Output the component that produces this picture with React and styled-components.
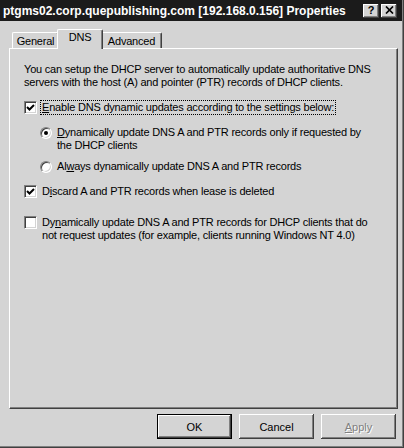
import React from 'react';
import styled, { createGlobalStyle } from 'styled-components';

const GlobalStyle = createGlobalStyle`
  html, body {
    margin: 0;
    padding: 0;
    background: #d4d4d4;
  }
  body {
    font-family: "Liberation Sans", Arial, sans-serif;
    font-size: 11px;
    color: #000;
  }
`;

const Window = styled.div`
  width: 404px;
  height: 448px;
  box-sizing: border-box;
  display: flex;
  flex-direction: column;
  background: #d4d4d4;
  border-right: 1px solid #404040;
  border-bottom: 1px solid #404040;
  box-shadow: inset -1px -1px 0 #808080;
`;

const TitleBar = styled.div`
  height: 21px;
  flex: none;
  display: flex;
  align-items: center;
  justify-content: space-between;
  padding: 0 5px 0 3px;
  margin-right: 1px;
  background: #1b1b1b;
`;

const Title = styled.span`
  color: #fff;
  font-weight: bold;
  font-size: 12px;
  white-space: nowrap;
`;

const TitleButtons = styled.div`
  display: flex;
  gap: 2px;
`;

const TitleButton = styled.div`
  width: 16px;
  height: 14px;
  box-sizing: border-box;
  display: flex;
  align-items: center;
  justify-content: center;
  background: #d4d4d4;
  box-shadow: inset -1px -1px 0 #404040, inset 1px 1px 0 #fff, inset -2px -2px 0 #808080;
  font-weight: bold;
  font-size: 11px;
  line-height: 1;
  padding-bottom: 1px;
`;

const Body = styled.div`
  flex: 1;
  display: flex;
  flex-direction: column;
  padding: 8px 5px 0 9px;
`;

const TabStrip = styled.div`
  height: 19px;
  display: flex;
  align-items: flex-end;
  padding-left: 3px;
`;

const Tab = styled.div`
  position: relative;
  box-sizing: border-box;
  width: ${p => p.$w}px;
  height: 16px;
  display: flex;
  justify-content: center;
  align-items: center;
  background: #d4d4d4;
  border-left: 1px solid #fff;
  border-top: 1px solid #fff;
  border-right: 1px solid #404040;
  border-radius: 2px 2px 0 0;
  box-shadow: inset -1px 0 0 #808080;
  letter-spacing: -0.2px;

  ${p => p.$selected && `
    width: ${p.$w + 4}px;
    height: 20px;
    margin: 0 -2px -1px;
    z-index: 1;
    align-items: flex-start;
    padding-top: 1px;
  `}
`;

const Panel = styled.div`
  height: 361px;
  flex: none;
  box-sizing: border-box;
  display: flex;
  flex-direction: column;
  padding: 14px 12px 0 14px;
  border-top: 1px solid #fff;
  border-left: 1px solid #fff;
  border-right: 1px solid #404040;
  border-bottom: 1px solid #404040;
  box-shadow: inset -1px -1px 0 #808080;
  line-height: 13px;
  letter-spacing: -0.2px;
`;

const Intro = styled.p`
  margin: 0;
`;

const Row = styled.div`
  display: flex;
  align-items: flex-start;
  gap: 5px;
  margin-top: ${p => p.$top}px;
`;

const RadioGroup = styled.div`
  display: flex;
  flex-direction: column;
  margin-left: 16px;
`;

const CheckBox = styled.div`
  flex: none;
  width: 13px;
  height: 13px;
  box-sizing: border-box;
  background: #fff;
  border: 1px solid;
  border-color: #808080 #fff #fff #808080;
  box-shadow: inset 1px 1px 0 #404040, inset -1px -1px 0 #d4d4d4;
  display: flex;
  align-items: center;
  justify-content: center;
`;

const Radio = styled.div`
  flex: none;
  width: 12px;
  height: 12px;
  margin-top: 1px;
  box-sizing: border-box;
  border-radius: 50%;
  background: #fff;
  border: 1px solid;
  border-color: #808080 #fff #fff #808080;
  box-shadow: inset 1px 1px 0 #404040, inset -1px -1px 0 #d4d4d4;
  display: flex;
  align-items: center;
  justify-content: center;

  &::after {
    content: '';
    width: 4px;
    height: 4px;
    border-radius: 50%;
    background: ${p => (p.$on ? '#000' : 'transparent')};
  }
`;

const Label = styled.span`
  white-space: nowrap;
  ${p => p.$focus && `
    outline: 1px dotted #000;
    outline-offset: 0;
    margin-left: -1px;
    padding: 0 1px;
  `}
`;

const U = styled.span`
  text-decoration: underline;
  text-underline-offset: 1px;
`;

const ButtonRow = styled.div`
  display: flex;
  justify-content: flex-end;
  gap: 7px;
  margin-top: 5px;
  padding-right: 2px;
`;

const Button = styled.div`
  width: 75px;
  height: 25px;
  box-sizing: border-box;
  display: flex;
  align-items: center;
  justify-content: center;
  background: #d4d4d4;
  box-shadow: inset -1px -1px 0 #404040, inset 1px 1px 0 #fff, inset -2px -2px 0 #808080;
  color: ${p => (p.$disabled ? '#808080' : '#000')};
  text-shadow: ${p => (p.$disabled ? '1px 1px 0 #fff' : 'none')};

  ${p => p.$default && `
    border: 1px solid #000;
  `}
`;

const Check = () => (
  <svg width="9" height="9" viewBox="0 0 9 9">
    <path d="M1 4 L3.5 6.5 L8 2" fill="none" stroke="#000" strokeWidth="2" />
  </svg>
);

const CloseGlyph = () => (
  <svg width="9" height="8" viewBox="0 0 9 8">
    <path d="M1 0.5 L8 7.5 M8 0.5 L1 7.5" stroke="#000" strokeWidth="1.7" />
  </svg>
);

export default function App() {
  return (
    <>
      <GlobalStyle />
      <Window>
        <TitleBar>
          <Title>ptgms02.corp.quepublishing.com [192.168.0.156] Properties</Title>
          <TitleButtons>
            <TitleButton>?</TitleButton>
            <TitleButton><CloseGlyph /></TitleButton>
          </TitleButtons>
        </TitleBar>

        <Body>
          <TabStrip>
            <Tab $w={47}>General</Tab>
            <Tab $w={42} $selected>DNS</Tab>
            <Tab $w={61}>Advanced</Tab>
          </TabStrip>

          <Panel>
            <Intro>
              You can setup the DHCP server to automatically update authoritative DNS
              <br />
              servers with the host (A) and pointer (PTR) records of DHCP clients.
            </Intro>

            <Row $top={12}>
              <CheckBox><Check /></CheckBox>
              <Label $focus><U>E</U>nable DNS dynamic updates according to the settings below:</Label>
            </Row>

            <RadioGroup>
              <Row $top={12}>
                <Radio $on />
                <Label>
                  <U>D</U>ynamically update DNS A and PTR records only if requested by
                  <br />
                  the DHCP clients
                </Label>
              </Row>
              <Row $top={8}>
                <Radio />
                <Label>Al<U>w</U>ays dynamically update DNS A and PTR records</Label>
              </Row>
            </RadioGroup>

            <Row $top={12}>
              <CheckBox><Check /></CheckBox>
              <Label>D<U>i</U>scard A and PTR records when lease is deleted</Label>
            </Row>

            <Row $top={18}>
              <CheckBox />
              <Label>
                Dy<U>n</U>amically update DNS A and PTR records for DHCP clients that do
                <br />
                not request updates (for example, clients running Windows NT 4.0)
              </Label>
            </Row>
          </Panel>

          <ButtonRow>
            <Button $default>OK</Button>
            <Button>Cancel</Button>
            <Button $disabled><U>A</U>pply</Button>
          </ButtonRow>
        </Body>
      </Window>
    </>
  );
}
